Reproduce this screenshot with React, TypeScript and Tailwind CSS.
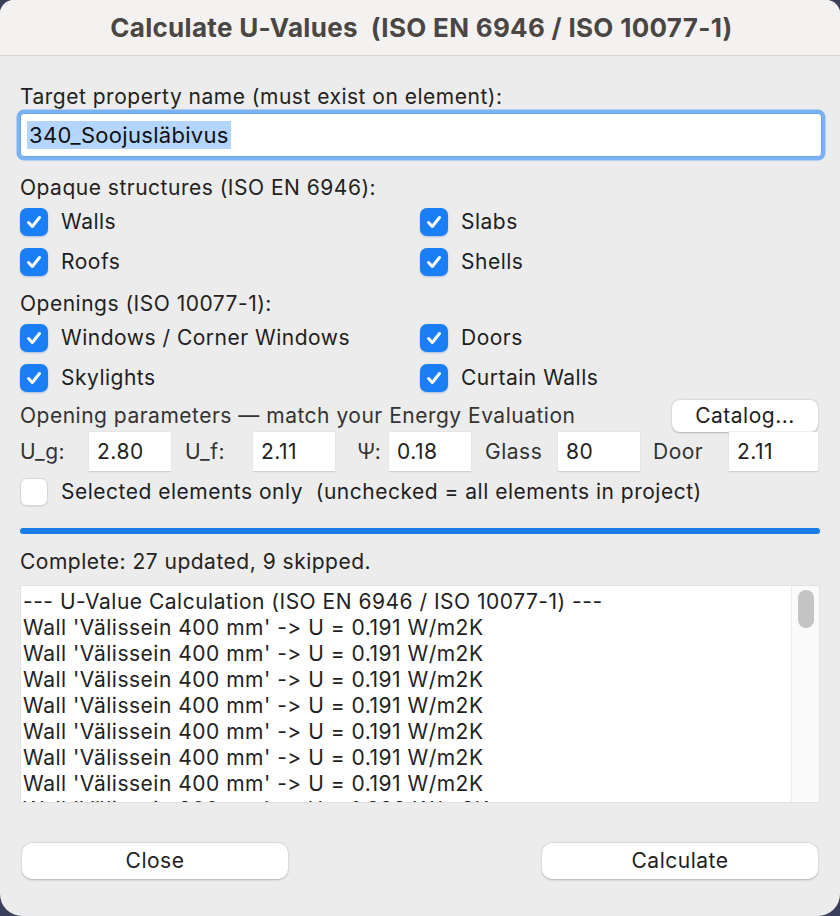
import { useState } from 'react';

const LOG_LINES = [
  "--- U-Value Calculation (ISO EN 6946 / ISO 10077-1) ---",
  "Wall 'Välissein 400 mm' -> U = 0.191 W/m2K",
  "Wall 'Välissein 400 mm' -> U = 0.191 W/m2K",
  "Wall 'Välissein 400 mm' -> U = 0.191 W/m2K",
  "Wall 'Välissein 400 mm' -> U = 0.191 W/m2K",
  "Wall 'Välissein 400 mm' -> U = 0.191 W/m2K",
  "Wall 'Välissein 400 mm' -> U = 0.191 W/m2K",
  "Wall 'Välissein 400 mm' -> U = 0.191 W/m2K",
  "Wall 'Välissein 300 mm' -> U = 1.228 W/m2K",
];

// label offset / label width / input width, in px
const PARAMS = [
  { label: 'U_g:', value: '2.80', cls: 'ml-0 w-[69px]', inputW: 'w-[82px]' },
  { label: 'U_f:', value: '2.11', cls: 'ml-[14px] w-[68px]', inputW: 'w-[82px]' },
  { label: 'Ψ:', value: '0.18', cls: 'ml-[22px] w-[32px]', inputW: 'w-[82px]' },
  { label: 'Glass', value: '80', cls: 'ml-[14px] w-[73px]', inputW: 'w-[82px]' },
  { label: 'Door', value: '2.11', cls: 'ml-[13px] w-[76px]', inputW: 'w-[89px]' },
];

function Check({ checked, onToggle, label }: { checked: boolean; onToggle: () => void; label: string }) {
  return (
    <button onClick={onToggle} className="flex items-center gap-[13px] h-[40px] text-left">
      {checked ? (
        <span className="w-[28px] h-[28px] shrink-0 rounded-[7px] bg-[#1a7ff6] flex items-center justify-center shadow-[0_1px_2px_rgba(0,80,200,0.3)]">
          <svg viewBox="0 0 20 20" className="w-[20px] h-[20px]">
            <path d="M4.5 10.5 L8.3 14.5 L15.5 5.5" fill="none" stroke="white" strokeWidth="3" strokeLinecap="round" strokeLinejoin="round" />
          </svg>
        </span>
      ) : (
        <span className="w-[28px] h-[28px] shrink-0 rounded-[7px] bg-white border border-[#d6d6d6] shadow-[0_1px_1px_rgba(0,0,0,0.08)]" />
      )}
      <span className="text-[#1e1e1e] whitespace-pre">{label}</span>
    </button>
  );
}

export default function App() {
  const [checks, setChecks] = useState<Record<string, boolean>>({
    Walls: true, Slabs: true, Roofs: true, Shells: true,
    'Windows / Corner Windows': true, Doors: true, Skylights: true, 'Curtain Walls': true,
  });
  const [selectedOnly, setSelectedOnly] = useState(false);
  const toggle = (k: string) => setChecks(c => ({ ...c, [k]: !c[k] }));

  const grid = (keys: string[]) => (
    <div className="grid grid-cols-[400px_1fr]">
      {keys.map(k => <Check key={k} label={k} checked={checks[k]} onToggle={() => toggle(k)} />)}
    </div>
  );

  return (
    <div className="w-[840px] h-[916px] bg-[#3a3f5c] font-['Inter',sans-serif] [font-feature-settings:'calt'_0,'liga'_0] text-[21px] tracking-[0.5px] leading-[24px]">
      <div className="w-full h-full bg-[#ececec] rounded-t-[14px] rounded-b-[22px] overflow-hidden flex flex-col">
        {/* title bar */}
        <div className="h-[56px] bg-[#f4f2f0] border-b border-[#d4d2d0] flex items-center justify-center">
          <span className="font-bold text-[26px] text-[#4a4644] tracking-[0.3px] pl-[3px]">Calculate U-Values&nbsp; (ISO EN 6946 / ISO 10077-1)</span>
        </div>

        <div className="px-[20px] flex flex-col">
          <div className="mt-[29px] text-[#222]">Target property name (must exist on element):</div>
          <div className="mt-[4px] h-[44px] rounded-[4px] bg-white shadow-[0_0_0_3.5px_#7ab2f3] border border-[#6aa4ea] flex items-center pl-[6px] mr-[-2px]">
            <span className="bg-[#b4d5fe] text-[#111] text-[22px] tracking-[0.3px] leading-[28px] px-[2px]">340_Soojusläbivus</span>
          </div>

          <div className="mt-[19px] text-[#222]">Opaque structures (ISO EN 6946):</div>
          <div className="mt-[2px]">{grid(['Walls', 'Slabs', 'Roofs', 'Shells'])}</div>

          <div className="mt-[10px] text-[#222]">Openings (ISO 10077-1):</div>
          <div className="mt-[2px]">{grid(['Windows / Corner Windows', 'Doors', 'Skylights', 'Curtain Walls'])}</div>

          <div className="mt-[2px] h-[32px] flex items-center justify-between">
            <span className="text-[#333]">Opening parameters — match your Energy Evaluation</span>
            <button className="w-[146px] h-[32px] rounded-[8px] bg-white shadow-[0_0.5px_2px_rgba(0,0,0,0.25)] text-[#1e1e1e] mr-[2px]">Catalog...</button>
          </div>

          <div className="flex items-center h-[40px]">
            {PARAMS.map(p => (
              <div key={p.label} className="flex items-center">
                <span className={`${p.cls} text-[#333]`}>{p.label}</span>
                <div className={`${p.inputW} h-[40px] bg-white border-b border-[#d2d2d2] shadow-[0_0_0_0.5px_#dedede] flex items-center pl-[8px] text-[#222]`}>
                  {p.value}
                </div>
              </div>
            ))}
          </div>

          <div>
            <Check label="Selected elements only  (unchecked = all elements in project)" checked={selectedOnly} onToggle={() => setSelectedOnly(s => !s)} />
          </div>

          <div className="mt-[16px] h-[6px] rounded-full bg-[#1a7ce6]" />

          <div className="mt-[16px] text-[#222]">Complete: 27 updated, 9 skipped.</div>

          <div className="mt-[11px] h-[218px] bg-white border border-[#e2e2e2] flex">
            <div className="flex-1 overflow-hidden pl-[2px] pt-[3px] text-[#222] leading-[26px] whitespace-nowrap">
              {LOG_LINES.map((l, i) => <div key={i}>{l}</div>)}
            </div>
            <div className="w-[28px] bg-[#fafafa] border-l border-[#ececec] pt-[4px] flex justify-center">
              <div className="w-[16px] h-[38px] rounded-full bg-[#c4c4c4]" />
            </div>
          </div>

          <div className="mt-[40px] flex justify-between">
            <button className="ml-[2px] w-[266px] h-[36px] rounded-[10px] bg-white shadow-[0_0.5px_2px_rgba(0,0,0,0.25)] text-[#1e1e1e]">Close</button>
            <button className="w-[276px] h-[36px] rounded-[10px] bg-white shadow-[0_0.5px_2px_rgba(0,0,0,0.25)] text-[#1e1e1e] mr-[2px]">Calculate</button>
          </div>
        </div>
      </div>
    </div>
  );
}
